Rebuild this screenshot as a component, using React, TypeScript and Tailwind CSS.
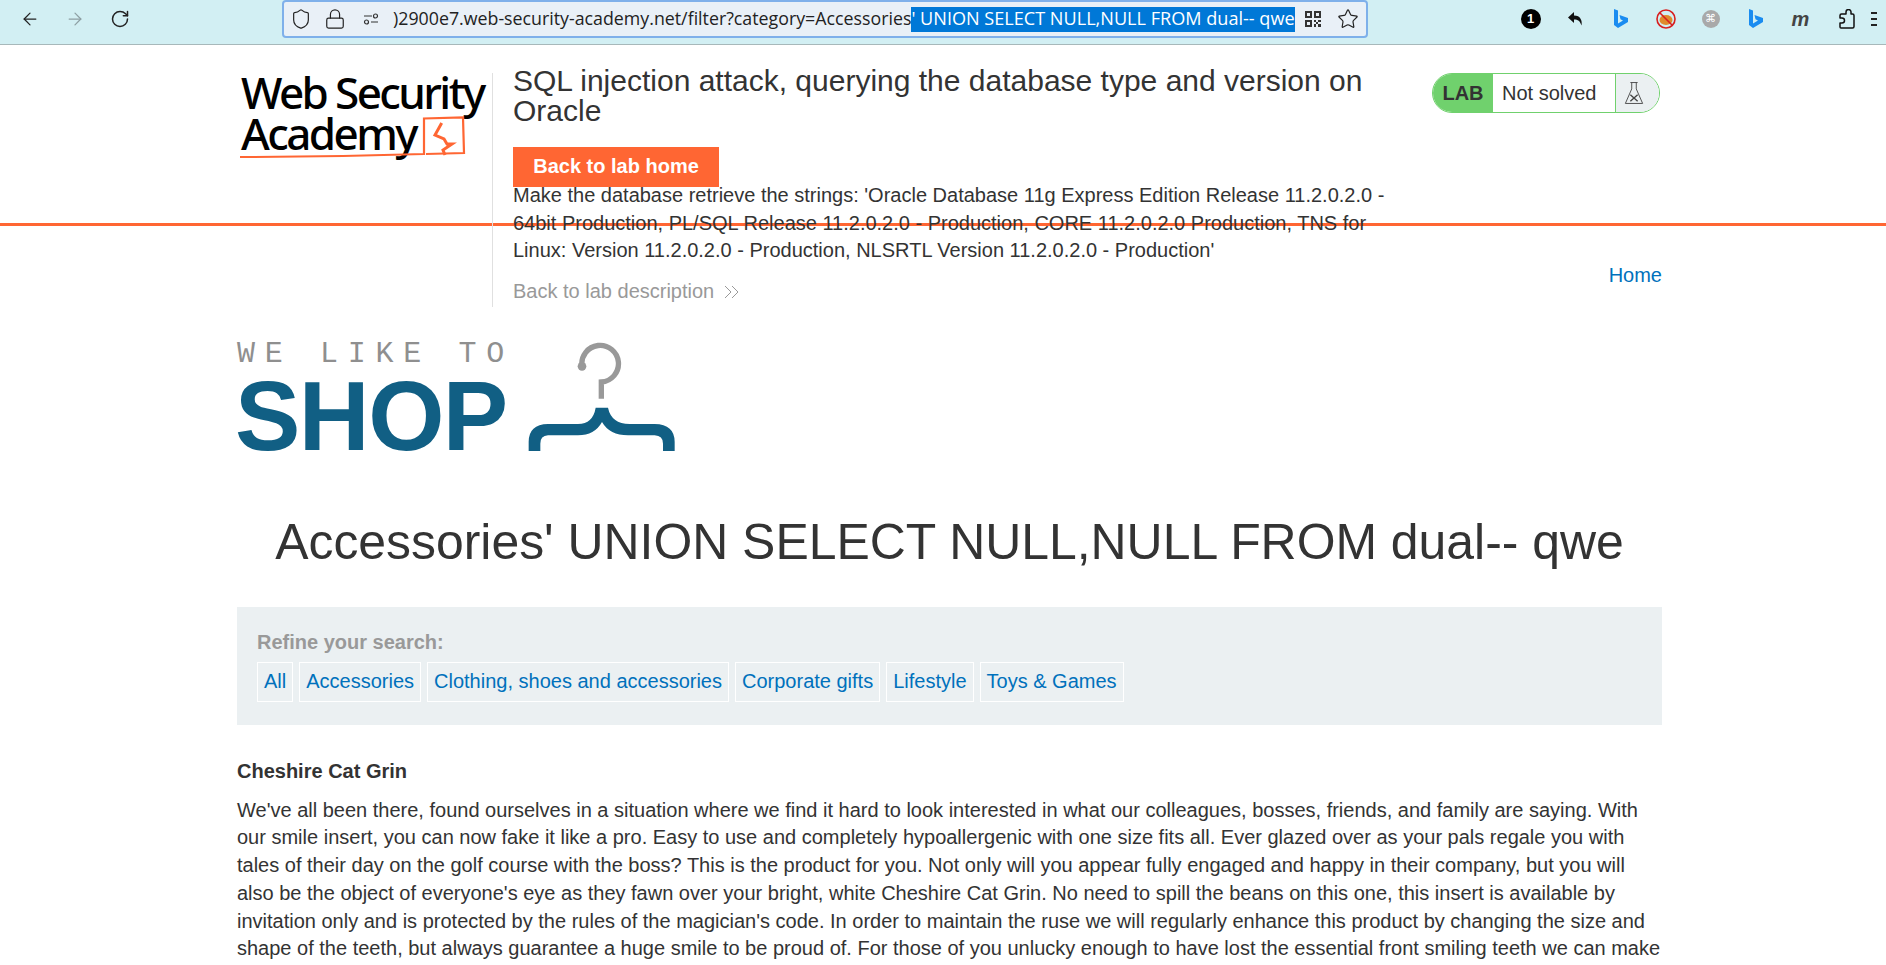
import { ArrowLeft, ArrowRight, Lock, RotateCw, Shield, Star } from 'lucide-react';

const categories = ['All', 'Accessories', 'Clothing, shoes and accessories', 'Corporate gifts', 'Lifestyle', 'Toys & Games'];

function BingIcon() {
  return (
    <svg width="16" height="22" viewBox="0 0 16 22">
      <path d="M1 1l4 1.500v13l5-3-2.500-1.200L6.500 7 15 10v4L5 20l-4-3z" fill="#1a8cf0" />
    </svg>
  );
}

function QrIcon() {
  return (
    <svg width="16" height="16" viewBox="0 0 16 16" fill="#333">
      <path d="M0 0h7v7H0zM2 2v3h3V2zM9 0h7v7H9zM11 2v3h3V2zM0 9h7v7H0zM2 11v3h3v-3z" fillRule="evenodd" />
      <path d="M9 9h2v2H9zM13 9h3v2h-3zM11 11h2v2h-2zM9 13h2v3H9zM13 13h3v3h-3z" />
    </svg>
  );
}

function BrowserBar() {
  return (
    <div className="flex h-[45px] items-start border-b border-[#a7b8ba] bg-[#d2eff3]">
      <div className="flex h-[38px] w-[282px] shrink-0 items-center pl-[20px] text-[#222]">
        <ArrowLeft size={20} strokeWidth={1.5} />
        <ArrowRight size={20} strokeWidth={1.5} className="ml-[25px] text-[#8d9fa3]" />
        <RotateCw size={20} strokeWidth={1.8} className="ml-[25px]" />
      </div>
      <div className="flex h-[38px] w-[1086px] shrink-0 items-center rounded-[4px] border-2 border-[#7fb0ea] bg-[#e9f0f7] pl-[6px] font-['Open_Sans',sans-serif] text-[18.100px] text-[#222]">
        <Shield size={22} strokeWidth={1.3} />
        <Lock size={22} strokeWidth={1.3} className="ml-[12px]" />
        <svg width="16" height="12" viewBox="0 0 16 12" fill="none" stroke="#333" strokeWidth="1.2" className="ml-[17px]">
          <path d="M1 3h8M8 9h7" />
          <circle cx="12.500" cy="3" r="2" />
          <circle cx="3.500" cy="9" r="2" />
        </svg>
        <span className="ml-[14px] text-[17.800px] whitespace-nowrap">)2900e7.web-security-academy.net/filter?category=Accessories</span>
        <span className="flex h-[25px] items-center whitespace-nowrap bg-[#0078d7] text-white">' UNION SELECT NULL,NULL FROM dual-- qwe</span>
        <span className="ml-[10px]"><QrIcon /></span>
        <Star size={22} strokeWidth={1.3} className="ml-[16px]" />
      </div>
      <div className="flex h-[38px] flex-1 items-center justify-end overflow-hidden text-[#111]">
        <span className="flex w-[45px] justify-center">
          <span className="flex h-[20px] w-[20px] items-center justify-center rounded-full bg-black font-['Liberation_Sans',sans-serif] text-[13px] font-bold text-white">1</span>
        </span>
        <span className="flex w-[45px] justify-center">
          <svg width="18" height="16" viewBox="0 0 18 16">
            <path d="M7 1L1 6.500 7 12V8.500c4 0 6 1.500 7.500 6 1-5-1-10-7.500-10z" fill="#111" />
          </svg>
        </span>
        <span className="flex w-[45px] justify-center"><BingIcon /></span>
        <span className="flex w-[45px] justify-center">
          <svg width="20" height="20" viewBox="0 0 20 20">
            <ellipse cx="10" cy="11" rx="6.500" ry="5" fill="#e08a2c" />
            <circle cx="10" cy="10" r="9" fill="none" stroke="#d81e1e" strokeWidth="1.600" />
            <path d="M4 4l12 12" stroke="#d81e1e" strokeWidth="1.600" />
          </svg>
        </span>
        <span className="flex w-[45px] justify-center">
          <span className="flex h-[18px] w-[18px] items-center justify-center rounded-full bg-[#a9a9a9] font-['DejaVu_Sans',sans-serif] text-[11px] text-white">⌘</span>
        </span>
        <span className="flex w-[45px] justify-center"><BingIcon /></span>
        <span className="flex w-[45px] justify-center font-['Liberation_Sans',sans-serif] text-[20px] leading-none font-bold text-[#444] italic">m</span>
        <span className="flex w-[48px] justify-center">
          <svg width="18" height="20" viewBox="0 0 18 20" fill="none" stroke="#111" strokeWidth="1.500" strokeLinejoin="round">
            <path d="M5 5h3V3a2.500 2.500 0 0 1 5 0v2h1.500a1.500 1.500 0 0 1 1.500 1.500v11a1.500 1.500 0 0 1-1.500 1.500H3a1 1 0 0 1-1-1v-4h2a2.200 2.200 0 0 0 0-5H2V6.500A1.500 1.500 0 0 1 3.500 5z" />
          </svg>
        </span>
        <span className="flex w-[15px] flex-col gap-[4px]">
          <span className="h-[2px] w-[6px] bg-[#222]" />
          <span className="h-[2px] w-[6px] bg-[#222]" />
          <span className="h-[2px] w-[6px] bg-[#222]" />
        </span>
      </div>
    </div>
  );
}

function AcademyLogo() {
  return (
    <div className="relative h-[100px] w-[252px] shrink-0 font-['Noto_Sans',sans-serif] text-[44px] leading-[42px] font-medium tracking-[-2.600px] text-black">
      <div className="absolute top-[-2px] left-[1px] whitespace-nowrap">Web Security</div>
      <div className="absolute top-[39px] left-[1px] whitespace-nowrap">Academy</div>
      <svg className="absolute top-0 left-0" width="252" height="100" viewBox="0 0 252 100" fill="none" stroke="#ff6633">
        <path d="M-2 84Q90 84 184 81V45.500L223 44.500L224 80L186 81" strokeWidth="2.200" />
        <path d="M201.700 50L195 62L204 66L207 71L212 71L203 77L205 82" strokeWidth="3" />
      </svg>
    </div>
  );
}

function LabStatus() {
  return (
    <div className="mr-[2px] flex h-[40px] w-[228px] shrink-0 overflow-hidden rounded-[20px] border border-[#70d16d] text-[20px] leading-normal">
      <div className="flex w-[60px] items-center justify-center bg-[#70d16d] font-bold text-[#333]">LAB</div>
      <div className="flex w-[123px] items-center border-r border-[#70d16d] pl-[9px] text-[#333]">Not solved</div>
      <div className="flex flex-1 items-center justify-center bg-[#ebf0f2] pr-[8px]">
        <svg width="20" height="26" viewBox="0 0 22 26" fill="none" stroke="#444" strokeWidth="1">
          <path d="M7 1.500h8M8.500 1.500v7L1.500 24.500h19L13.500 8.500v-7" />
          <path d="M7 15l8 7M15 15l-8 7" strokeWidth="1.500" />
        </svg>
      </div>
    </div>
  );
}

function LabHeader() {
  return (
    <div className="flex h-[234px] items-start pl-[3px]">
      <AcademyLogo />
      <div className="flex h-full flex-1 items-start justify-between">
        <div className="h-full w-[909px] shrink-0 border-l border-[#e0e0e0] pl-[20px]">
          <h2 className="-mt-[7px] text-[30px] leading-[30px] font-normal text-[#333]">SQL injection attack, querying the database type and version on Oracle</h2>
          <a className="mt-[21px] flex h-[40px] w-[206px] items-center justify-center bg-[#ff6633] font-bold text-white">Back to lab home</a>
          <p className="-mt-[5px] text-[#333]">Make the database retrieve the strings: 'Oracle Database 11g Express Edition Release 11.2.0.2.0 - 64bit Production, PL/SQL Release 11.2.0.2.0 - Production, CORE 11.2.0.2.0 Production, TNS for Linux: Version 11.2.0.2.0 - Production, NLSRTL Version 11.2.0.2.0 - Production'</p>
          <a className="mt-[13px] flex items-center text-[#999]">
            Back to lab description
            <svg width="16" height="14" viewBox="0 0 16 14" fill="none" stroke="#999" strokeWidth="1" className="ml-[10px]">
              <path d="M1 1l6 6-6 6M8 1l6 6-6 6" />
            </svg>
          </a>
        </div>
        <div className="flex h-full flex-col items-end">
          <LabStatus />
          <a className="mt-[149px] text-[#0071bc]">Home</a>
        </div>
      </div>
    </div>
  );
}

function ShopLogo() {
  return (
    <div className="mt-[28px] flex items-end">
      <div className="w-[291px] shrink-0">
        <div className="mt-[2px] font-['Liberation_Mono',monospace] text-[30px] leading-[34px] tracking-[9.700px] whitespace-nowrap text-[#8f8f8f]">WE LIKE TO</div>
        <div className="-ml-[2px] text-[98px] leading-[90px] font-bold tracking-[-1.500px] text-[#115f84]">SHOP</div>
      </div>
      <svg width="148" height="110" viewBox="925 35 444 330" className="mb-[9px]">
        <path d="M1087 108A55 55 0 1 1 1145 155V205" fill="none" stroke="#999" strokeWidth="16" />
        <circle cx="1087" cy="108" r="13" fill="#999" />
        <path d="M927 362V335Q927 282 985 281H1075Q1120 280 1128 232H1165Q1175 280 1230 281H1305Q1365 282 1365 335V362H1330V340Q1330 316 1305 315H1225Q1170 315 1147 275Q1125 315 1075 315H985Q962 316 962 340V362Z" fill="#115f84" />
      </svg>
    </div>
  );
}

export default function App() {
  return (
    <div className="relative h-[965px] overflow-hidden bg-white font-['Liberation_Sans',sans-serif] text-[20px] leading-[27.700px] text-[#333]">
      <BrowserBar />
      <div className="absolute top-[223px] right-0 left-0 h-[3px] bg-[#ff6633]" />
      <main className="relative ml-[237px] w-[1425px] pt-[28px]">
        <LabHeader />
        <ShopLogo />
        <h1 className="mt-[53px] text-center text-[49.900px] leading-[56px] font-normal text-[#333]">Accessories' UNION SELECT NULL,NULL FROM dual-- qwe</h1>
        <section className="mt-[37px] h-[118px] bg-[#ebf0f2] px-[20px] pt-[22px]">
          <div className="font-bold text-[#999]">Refine your search:</div>
          <div className="mt-[5px] flex gap-[6px]">
            {categories.map((category) => (
              <a key={category} className="flex h-[40px] items-center border border-white px-[6px] text-[#0071bc]">{category}</a>
            ))}
          </div>
        </section>
        <section className="mt-[33px]">
          <h3 className="font-bold">Cheshire Cat Grin</h3>
          <p className="mt-[11px]">We've all been there, found ourselves in a situation where we find it hard to look interested in what our colleagues, bosses, friends, and family are saying. With our smile insert, you can now fake it like a pro. Easy to use and completely hypoallergenic with one size fits all. Ever glazed over as your pals regale you with tales of their day on the golf course with the boss? This is the product for you. Not only will you appear fully engaged and happy in their company, but you will also be the object of everyone's eye as they fawn over your bright, white Cheshire Cat Grin. No need to spill the beans on this one, this insert is available by invitation only and is protected by the rules of the magician's code. In order to maintain the ruse we will regularly enhance this product by changing the size and shape of the teeth, but always guarantee a huge smile to be proud of. For those of you unlucky enough to have lost the essential front smiling teeth we can make</p>
        </section>
      </main>
    </div>
  );
}
